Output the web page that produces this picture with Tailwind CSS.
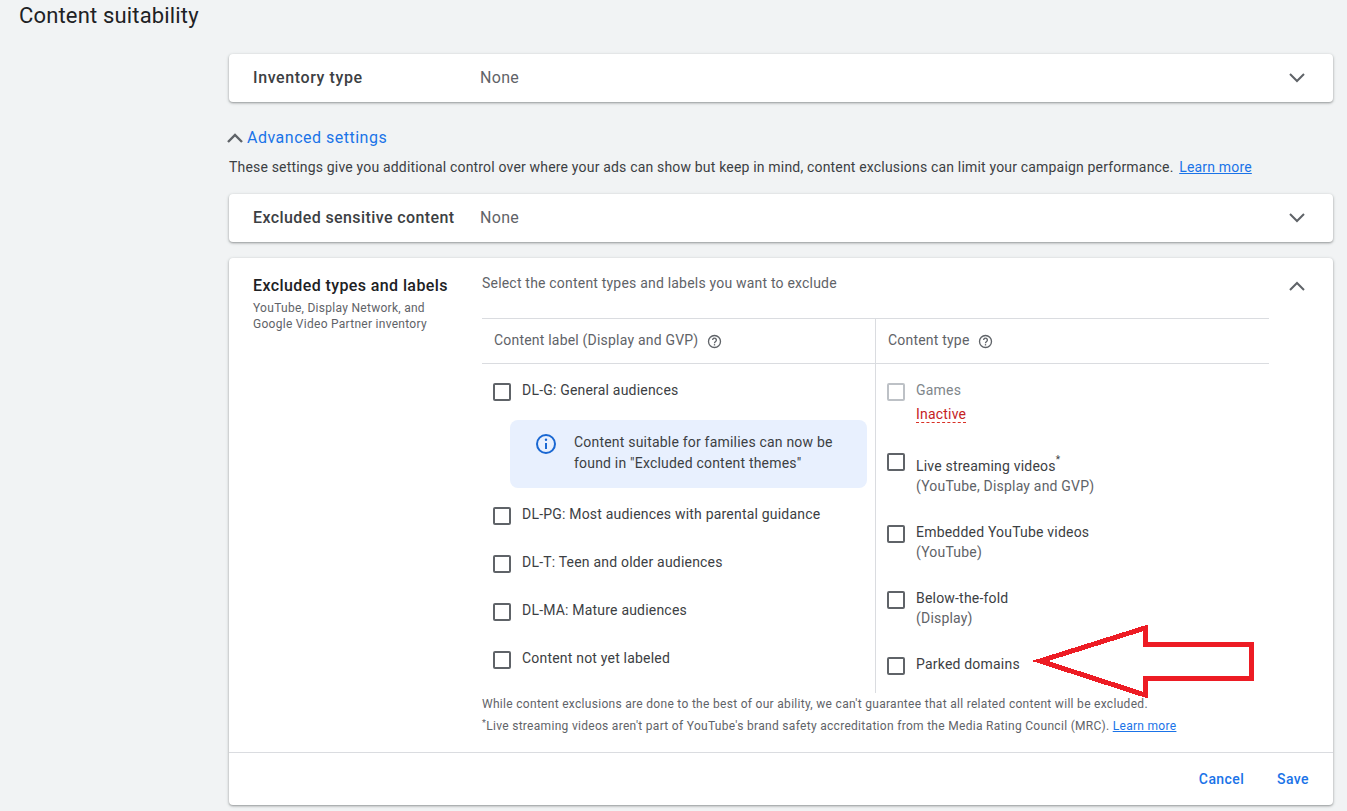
<!DOCTYPE html>
<html lang="en">
<head>
  <meta charset="UTF-8" />
  <meta name="viewport" content="width=device-width, initial-scale=1.0"/>
  <title>Content suitability</title>
  <script src="https://cdn.jsdelivr.net/npm/@tailwindcss/browser@4"></script>
</head>
<body class="bg-[#f1f3f4] text-[#3c4043] font-['Roboto',sans-serif] h-[811px] overflow-hidden relative">

  <!-- Page title -->
  <h1 class="text-[22px] leading-[32px] tracking-[0.16px] text-[#202124] pl-[19px]">Content suitability</h1>

  <div class="ml-[229px] mr-[14px] mt-[22px]">

    <!-- Inventory type -->
    <div class="h-[48px] bg-white rounded shadow-[0_1px_2px_rgba(60,64,67,0.4),0_1px_3px_1px_rgba(60,64,67,0.12)] flex items-center pl-6 pr-[26px]">
      <div class="w-[227px] text-[16px] tracking-[0.6px] font-medium text-[#3c4043]">Inventory type</div>
      <div class="text-[16px] tracking-[0.3px] text-[#5f6368] flex-1">None</div>
      <svg class="w-[20px] h-[12px]" viewBox="0 0 20 12" fill="none" stroke="#5f6368" stroke-width="2"><path d="M3 2l7 7 7-7"/></svg>
    </div>

    <!-- Advanced settings -->
    <div class="flex items-center mt-[25px] h-[22px] -ml-[3px]">
      <svg class="w-[18px] h-[12px] mr-[3px]" viewBox="0 0 18 12" fill="none" stroke="#5f6368" stroke-width="2.4"><path d="M2 10l7-7 7 7"/></svg>
      <span class="text-[16px] tracking-[0.5px] text-[#1a73e8]">Advanced settings</span>
    </div>
    <p class="text-[14px] leading-[20px] tracking-[0.18px] mt-[8px] text-[#3c4043]">These settings give you additional control over where your ads can show but keep in mind, content exclusions can limit your campaign performance. <a class="text-[#1a73e8] underline ml-[2px]">Learn more</a></p>

    <!-- Excluded sensitive content -->
    <div class="h-[48px] mt-[17px] bg-white rounded shadow-[0_1px_2px_rgba(60,64,67,0.4),0_1px_3px_1px_rgba(60,64,67,0.12)] flex items-center pl-6 pr-[26px]">
      <div class="w-[227px] text-[16px] tracking-[0.4px] font-medium text-[#3c4043]">Excluded sensitive content</div>
      <div class="text-[16px] tracking-[0.3px] text-[#5f6368] flex-1">None</div>
      <svg class="w-[20px] h-[12px]" viewBox="0 0 20 12" fill="none" stroke="#5f6368" stroke-width="2"><path d="M3 2l7 7 7-7"/></svg>
    </div>

    <!-- Excluded types and labels -->
    <div class="h-[547px] mt-[16px] bg-white rounded shadow-[0_1px_2px_rgba(60,64,67,0.4),0_1px_3px_1px_rgba(60,64,67,0.12)] flex flex-col">
      <div class="flex flex-1">
        <div class="w-[253px] pl-6 pt-[18px]">
          <div class="text-[16px] leading-[20px] tracking-[0.4px] font-medium text-[#202124]">Excluded types and labels</div>
          <div class="text-[12px] leading-[16px] tracking-[0.28px] mt-[4px] text-[#5f6368]">YouTube, Display Network, and<br>Google Video Partner inventory</div>
        </div>

        <div class="w-[787px] tracking-[0.2px]">
          <div class="text-[14px] leading-[20px] text-[#5f6368] pt-[15px] h-[60px]">Select the content types and labels you want to exclude</div>

          <div class="flex border-t border-[#dadce0] h-[375px]">
            <!-- Content label column -->
            <div class="w-[394px] border-r border-[#dadce0]">
              <div class="h-[45px] border-b border-[#dadce0] flex items-center pl-3 pb-[2px] text-[14px] text-[#5f6368]">
                Content label (Display and GVP)
                <svg class="w-[15px] h-[15px] ml-[9px] mt-[2px]" viewBox="0 0 16 16" fill="none" stroke="#5f6368" stroke-width="1.4"><circle cx="8" cy="8" r="6.4"/><path d="M6 6.4a2 2 0 1 1 3.2 1.6c-.8.6-1.2 1-1.2 1.8"/><path d="M8 10.8v1.4"/></svg>
              </div>
              <div class="pl-[11px] pt-[16px] text-[14px] leading-[20px] text-[#3c4043]">
                <div class="flex h-[20px]">
                  <span class="w-[18px] h-[18px] border-2 border-[#5f6368] rounded-[2px] mt-[3px] mr-[11px]"></span>DL-G: General audiences
                </div>
                <div class="ml-[17px] mt-[20px] w-[357px] h-[68px] bg-[#e8f0fe] rounded-lg flex pl-[24px] pt-[12px]">
                  <svg class="w-[24px] h-[24px] mr-[16px] shrink-0" viewBox="0 0 24 24" fill="none"><circle cx="12" cy="12" r="9" stroke="#1967d2" stroke-width="2"/><path d="M12 11v6" stroke="#1967d2" stroke-width="2"/><circle cx="12" cy="7.8" r="1.2" fill="#1967d2"/></svg>
                  <div class="leading-[21px] text-[#3c4043]">Content suitable for families can now be<br>found in "Excluded content themes"</div>
                </div>
                <div class="flex h-[20px] mt-[16px]">
                  <span class="w-[18px] h-[18px] border-2 border-[#5f6368] rounded-[2px] mt-[3px] mr-[11px]"></span>DL-PG: Most audiences with parental guidance
                </div>
                <div class="flex h-[20px] mt-[28px]">
                  <span class="w-[18px] h-[18px] border-2 border-[#5f6368] rounded-[2px] mt-[3px] mr-[11px]"></span>DL-T: Teen and older audiences
                </div>
                <div class="flex h-[20px] mt-[28px]">
                  <span class="w-[18px] h-[18px] border-2 border-[#5f6368] rounded-[2px] mt-[3px] mr-[11px]"></span>DL-MA: Mature audiences
                </div>
                <div class="flex h-[20px] mt-[28px]">
                  <span class="w-[18px] h-[18px] border-2 border-[#5f6368] rounded-[2px] mt-[3px] mr-[11px]"></span>Content not yet labeled
                </div>
              </div>
            </div>

            <!-- Content type column -->
            <div class="flex-1">
              <div class="h-[45px] border-b border-[#dadce0] flex items-center pl-3 pb-[2px] text-[14px] text-[#5f6368]">
                Content type
                <svg class="w-[15px] h-[15px] ml-[8px] mt-[2px]" viewBox="0 0 16 16" fill="none" stroke="#5f6368" stroke-width="1.4"><circle cx="8" cy="8" r="6.4"/><path d="M6 6.4a2 2 0 1 1 3.2 1.6c-.8.6-1.2 1-1.2 1.8"/><path d="M8 10.8v1.4"/></svg>
              </div>
              <div class="pl-[11px] pt-[16px] text-[14px] leading-[20px] text-[#3c4043]">
                <div class="flex">
                  <span class="w-[18px] h-[18px] border-2 border-[#bdc1c6] rounded-[2px] mt-[3px] mr-[11px]"></span>
                  <div>
                    <div class="text-[#80868b]">Games</div>
                    <div class="mt-[6px] text-[#c5221f] leading-[16px] inline-block border-b border-dashed border-[#d93025]">Inactive</div>
                  </div>
                </div>
                <div class="flex mt-[29px]">
                  <span class="w-[18px] h-[18px] border-2 border-[#5f6368] rounded-[2px] mr-[11px]"></span>
                  <div class="pt-[3px]">
                    <div>Live streaming videos<sup class="text-[10px] leading-[0] align-[3px]">*</sup></div>
                    <div class="text-[#5f6368]">(YouTube, Display and GVP)</div>
                  </div>
                </div>
                <div class="flex mt-[26px]">
                  <span class="w-[18px] h-[18px] border-2 border-[#5f6368] rounded-[2px] mt-[3px] mr-[11px]"></span>
                  <div>
                    <div>Embedded YouTube videos</div>
                    <div class="text-[#5f6368]">(YouTube)</div>
                  </div>
                </div>
                <div class="flex mt-[26px]">
                  <span class="w-[18px] h-[18px] border-2 border-[#5f6368] rounded-[2px] mt-[3px] mr-[11px]"></span>
                  <div>
                    <div>Below-the-fold</div>
                    <div class="text-[#5f6368]">(Display)</div>
                  </div>
                </div>
                <div class="flex mt-[26px]">
                  <span class="w-[18px] h-[18px] border-2 border-[#5f6368] rounded-[2px] mt-[3px] mr-[11px]"></span>Parked domains
                </div>
              </div>
            </div>
          </div>

          <!-- Footnotes -->
          <div class="text-[12px] text-[#5f6368] leading-[16px] pt-[3px] tracking-[0.3px]">
            <div>While content exclusions are done to the best of our ability, we can't guarantee that all related content will be excluded.</div>
            <div class="mt-[6px]"><sup class="text-[9px] leading-[0]">*</sup>Live streaming videos aren't part of YouTube's brand safety accreditation from the Media Rating Council (MRC). <a class="text-[#1a73e8] underline">Learn more</a></div>
          </div>
        </div>

        <div class="flex-1 flex justify-center pt-[22px] pr-[8px]">
          <svg class="w-[20px] h-[12px]" viewBox="0 0 20 12" fill="none" stroke="#5f6368" stroke-width="2"><path d="M3 10l7-7 7 7"/></svg>
        </div>
      </div>

      <!-- Actions -->
      <div class="h-[53px] border-t border-[#dadce0] flex items-center justify-end pr-[24px] gap-[33px] text-[14px] tracking-[0.4px] font-medium text-[#1a73e8]">
        <span>Cancel</span>
        <span>Save</span>
      </div>
    </div>
  </div>

  <!-- Red annotation arrow over the screenshot -->
  <svg class="absolute left-0 top-0 pointer-events-none" width="1347" height="811" fill="none" shape-rendering="crispEdges">
    <path d="M1040 661L1145 628V644H1251V678H1145V695Z" stroke="#ed1c24" stroke-width="5"/>
  </svg>
</body>
</html>
